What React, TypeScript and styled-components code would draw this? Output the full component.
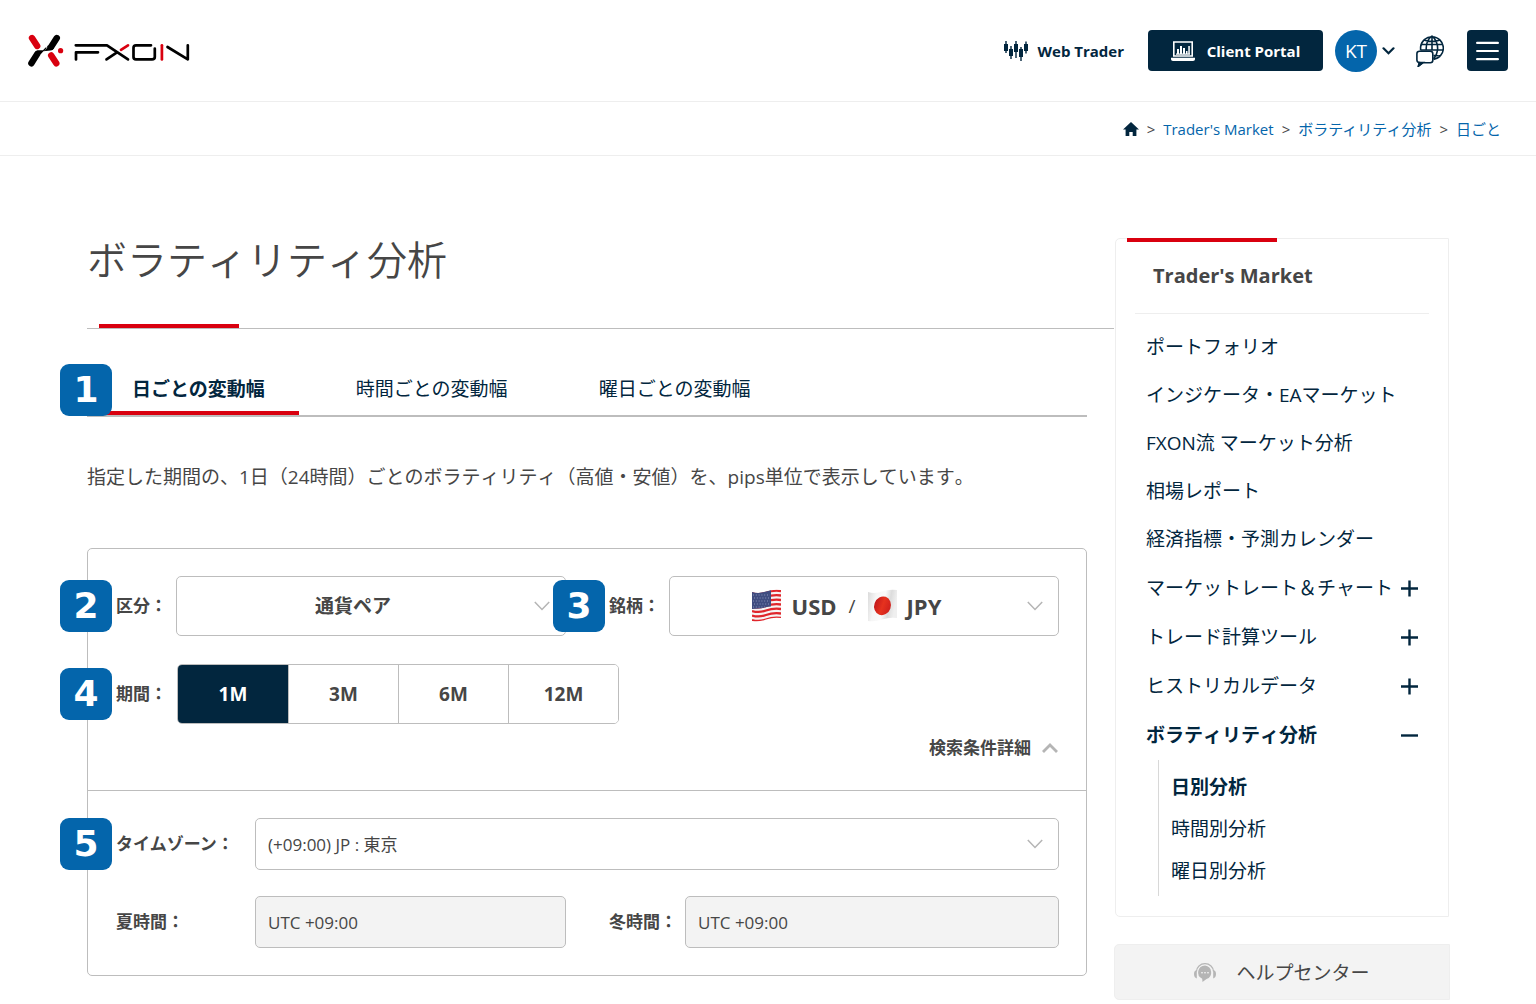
import React, { useState } from "react";
import styled, { createGlobalStyle, css } from "styled-components";

const navy = "#02263e";
const blue = "#0465ab";
const red = "#d9000f";
const ink = "#464646";
const line = "#bdbdbd";
const pale = "#eeeeee";
const sans = `"Open Sans", "Noto Sans CJK JP", sans-serif`;

const GlobalStyle = createGlobalStyle`
  *, *::before, *::after { box-sizing: border-box; }
  body { margin: 0; background: #fff; color: ${ink}; font-family: ${sans}; font-size: 19px; font-weight: 400; }
  button, input, select { font: inherit; color: inherit; margin: 0; }
  button { cursor: pointer; }
  a { color: inherit; text-decoration: none; }
  ul, ol { list-style: none; margin: 0; padding: 0; }
  svg { display: block; flex: none; }
`;

/* ---------- header ---------- */

const Header = styled.header`
  display: flex;
  align-items: center;
  justify-content: space-between;
  height: 102px;
  padding: 0 28px;
  border-bottom: 1px solid ${pale};
`;

const HeaderNav = styled.nav`
  display: flex;
  align-items: center;
`;

const WebTrader = styled.a`
  display: flex;
  align-items: center;
  gap: 10px;
  margin-right: 24px;
  color: ${navy};
  font-size: 15px;
  font-weight: 700;
`;

const PortalButton = styled.a`
  display: flex;
  align-items: center;
  justify-content: center;
  gap: 12px;
  width: 175px;
  height: 41px;
  margin-right: 12px;
  border-radius: 4px;
  background: ${navy};
  color: #fff;
  font-size: 15px;
  font-weight: 700;
`;

const AccountButton = styled.button`
  display: flex;
  align-items: center;
  gap: 5px;
  margin-right: 21px;
  padding: 0;
  border: 0;
  background: none;
  color: ${navy};
`;

const Avatar = styled.span`
  display: grid;
  place-items: center;
  width: 42px;
  height: 42px;
  border-radius: 50%;
  background: ${blue};
  color: #fff;
  font-size: 19px;
`;

const IconButton = styled.button`
  display: grid;
  place-items: center;
  margin-right: 23px;
  padding: 0;
  border: 0;
  background: none;
`;

const MenuButton = styled.button`
  display: grid;
  place-items: center;
  width: 41px;
  height: 41px;
  padding: 0;
  border: 0;
  border-radius: 4px;
  background: ${navy};
`;

const Breadcrumb = styled.nav`
  height: 54px;
  padding: 0 35px;
  border-bottom: 1px solid ${pale};
  font-size: 15px;

  ol {
    display: flex;
    align-items: center;
    justify-content: flex-end;
    height: 100%;
  }
  li {
    display: flex;
    align-items: center;
  }
  li + li::before {
    content: ">";
    margin: 0 8px;
  }
  a {
    color: ${blue};
  }
`;

/* ---------- page frame ---------- */

const Page = styled.div`
  display: flex;
  align-items: flex-start;
  padding: 82px 87px 4px;
`;

const Content = styled.main`
  flex: 1;
  min-width: 0;
`;

const Title = styled.h1`
  position: relative;
  margin: 0;
  padding-bottom: 46px;
  border-bottom: 1px solid ${line};
  font-size: 40px;
  line-height: 44px;
  font-weight: 350;
  font-kerning: none;

  &::after {
    content: "";
    position: absolute;
    left: 12px;
    bottom: 0;
    width: 140px;
    height: 4px;
    background: ${red};
  }
`;

const Inner = styled.div`
  padding: 35px 27px 0 0;
`;

const Badge = styled.span`
  position: absolute;
  left: -56px;
  top: 50%;
  z-index: 1;
  display: grid;
  place-items: center;
  width: 52px;
  height: 52px;
  margin-top: -26px;
  border-radius: 9px;
  background: ${blue};
  color: #fff;
  font-family: "DejaVu Sans", sans-serif;
  font-size: 36px;
  line-height: 52px;
  font-weight: 700;
`;

const TabBar = styled.div`
  position: relative;
  display: flex;
  gap: 23px;
  height: 53px;
  padding-left: 11px;
  border-bottom: 2px solid ${line};

  & > ${Badge} {
    left: -27px;
  }
`;

const Tab = styled.button<{ $active: boolean }>`
  height: 51px;
  padding: 0 34px;
  border: 0;
  border-bottom: 4px solid ${(p) => (p.$active ? red : "transparent")};
  background: none;
  color: ${navy};
  font-size: 19px;
  font-weight: ${(p) => (p.$active ? 700 : 400)};
`;

const Lead = styled.p`
  margin: 44px 0 55px;
  line-height: 32px;
  font-kerning: none;
`;

/* ---------- search panel ---------- */

const Panel = styled.form`
  border: 1px solid ${line};
  border-radius: 5px;
`;

const PanelSection = styled.div<{ $divided?: boolean }>`
  display: grid;
  gap: ${(p) => (p.$divided ? 26 : 28)}px 43px;
  grid-template-columns: 1fr 1fr;
  padding: 27px;
  padding-left: 28px;
  ${(p) => p.$divided && css`border-top: 1px solid ${line};`}
`;

const Field = styled.div<{ $label: number; $wide?: boolean }>`
  position: relative;
  display: grid;
  grid-template-columns: ${(p) => p.$label}px 1fr;
  align-items: center;
  ${(p) => p.$wide && css`grid-column: 1 / -1;`}
`;

const labelText = css`
  font-size: 17px;
  line-height: 24px;
  font-weight: 700;
  white-space: nowrap;
`;

const Label = styled.label`
  ${labelText}
`;

const control = css`
  width: 100%;
  border: 1px solid ${line};
  border-radius: 5px;
  background: #fff;
`;

const SelectBox = styled.div`
  position: relative;

  & > svg {
    position: absolute;
    right: 16px;
    top: 50%;
    margin-top: -5px;
    pointer-events: none;
  }
`;

const CenteredSelect = styled.select`
  ${control}
  appearance: none;
  height: 60px;
  padding: 0 36px 0 0;
  text-align: center;
  text-align-last: center;
  font-weight: 700;
`;

const PlainSelect = styled.select`
  ${control}
  appearance: none;
  height: 52px;
  padding: 0 36px 0 12px;
  font-size: 17px;
`;

const PairButton = styled.button`
  ${control}
  display: flex;
  align-items: center;
  justify-content: center;
  gap: 12px;
  height: 60px;
  padding: 0 36px 0 0;

  b {
    font-size: 22px;
  }
`;

const CurrencyTag = styled.span`
  display: flex;
  align-items: center;
  gap: 10px;
`;

const ReadonlyInput = styled.input`
  ${control}
  height: 52px;
  padding: 0 12px;
  background: #f3f3f3;
  font-size: 17px;
`;

const PeriodGroup = styled.div`
  display: grid;
  grid-template-columns: repeat(4, 110px);
  justify-self: start;
  height: 60px;
  margin-left: 1px;
  overflow: hidden;
  border: 1px solid ${line};
  border-radius: 5px;
`;

const PeriodButton = styled.button<{ $active: boolean }>`
  padding: 0;
  border: 0;
  background: ${(p) => (p.$active ? navy : "#fff")};
  color: ${(p) => (p.$active ? "#fff" : ink)};
  font-weight: 700;

  & + & {
    border-left: 1px solid ${line};
  }
`;

const DetailRow = styled.div`
  display: flex;
  justify-content: flex-end;
  padding: 0 28px 30px;
  margin-top: -15px;
`;

const DetailToggle = styled.button`
  display: flex;
  align-items: center;
  gap: 11px;
  padding: 0;
  border: 0;
  background: none;
  ${labelText}
`;

/* ---------- sidebar ---------- */

const Sidebar = styled.aside`
  width: 336px;
  margin-right: -1px;
`;

const SideCard = styled.nav`
  position: relative;
  margin: 0 1px;
  padding: 0 19px 20px;
  border: 1px solid ${pale};
  border-radius: 5px 0 0 5px;

  &::before {
    content: "";
    position: absolute;
    left: 11px;
    top: -1px;
    width: 150px;
    height: 4px;
    background: ${red};
  }
`;

const SideTitle = styled.h2`
  margin: 0 0 8px;
  padding-left: 18px;
  border-bottom: 1px solid ${pale};
  font-size: 20px;
  line-height: 74px;
  font-weight: 700;
`;

const SideItem = styled.a`
  display: flex;
  align-items: center;
  height: 48px;
  padding-left: 11px;
  color: ${navy};
  white-space: nowrap;
  font-kerning: none;
`;

const SideToggle = styled.button<{ $open: boolean }>`
  display: flex;
  align-items: center;
  justify-content: space-between;
  width: 100%;
  height: 49px;
  padding: 0 10px 0 11px;
  border: 0;
  background: none;
  color: ${navy};
  white-space: nowrap;
  font-kerning: none;
  font-weight: ${(p) => (p.$open ? 700 : 400)};
`;

const SubList = styled.ul`
  margin: 2px 0 0 23px;
  padding: 5px 0 5px 12px;
  border-left: 1px solid #d8d8d8;
`;

const SubItem = styled.a<{ $current: boolean }>`
  display: flex;
  align-items: center;
  height: 42px;
  color: ${navy};
  font-weight: ${(p) => (p.$current ? 700 : 400)};
`;

const HelpLink = styled.a`
  display: flex;
  align-items: center;
  justify-content: center;
  gap: 20px;
  height: 56px;
  margin-top: 27px;
  border: 1px solid ${pale};
  border-radius: 5px 0 0 5px;
  background: #f3f3f3;
`;

/* ---------- drawings ---------- */

const Logo = () => (
  <svg width="162" height="34" viewBox="28 34 162 34" fill="none" role="img" aria-label="FXON">
    <g strokeLinecap="round" strokeWidth="6.4">
      <line x1="32" y1="38" x2="37.2" y2="46" stroke={red} />
      <line x1="51.2" y1="55.4" x2="56.3" y2="63.3" stroke={red} />
      <line x1="56.8" y1="38" x2="51.2" y2="46.8" stroke="#000" />
      <line x1="31.4" y1="63.3" x2="37" y2="54.4" stroke="#000" />
    </g>
    <path d="M47.5 47.3L45 50.4L43.4 51.3L40.5 54.5L34.5 52.6Q35.8 50.4 37.5 50.3L43 50.2L45.6 47.6ZM45 50.2L43.4 51.2L50.5 50.5Q53 50.2 54 48.3L48 45.2Z" fill="#000" />
    <circle cx="60.6" cy="50.7" r="2.6" fill={red} />
    <g strokeWidth="2.7" strokeLinecap="round" strokeLinejoin="round" stroke="#000">
      <polyline points="75.8,45.3 107,45.3 128,59.4" />
      <polyline points="76,59.4 76,52.3 98,52.3" />
      <line x1="106.5" y1="59.4" x2="117" y2="52.4" />
      <path d="M151 45.3H136Q133.5 45.3 133.5 47.8V57Q133.5 59.4 136 59.4H152Q154.8 59.4 154.8 57V48.5" />
      <polyline points="167.5,47 187.8,59.4 187.8,45.3" />
      <line x1="121" y1="49.8" x2="128" y2="45.3" stroke={red} />
      <line x1="161.9" y1="45.3" x2="161.9" y2="59.4" stroke={red} />
    </g>
  </svg>
);

const CandlesIcon = () => (
  <svg width="24" height="22" viewBox="0 0 24 22" fill={navy}>
    <path d="M0 4h4v7H0zM1.3 1h1.400v12H1.300zM5 9h4v7H5zM6.300 6h1.400v13H6.300zM10 4h4v8h-4zM11.300 1h1.400v17h-1.400zM15 9h4v8h-4zM16.300 7h1.400v14h-1.400zM20 4h4v7h-4zM21.300 1.500h1.400v12h-1.400z" />
  </svg>
);

const LaptopIcon = () => (
  <svg width="24" height="20" viewBox="0 0 24 20" fill="none">
    <path d="M2.800 15V1h18.400v14z" stroke="#fff" strokeWidth="1.600" />
    <path d="M6 13V8h2v5zM9 13V5h2v8zM12 13V7h2v6zM15 13v-3h1.500v3zM17.300 13V5h1.500v8zM5 12.600h14v1.200H5zM0 16.800h24v1.400q0 1.800-2 1.800H2q-2 0-2-1.800z" fill="#fff" />
  </svg>
);

const GlobeIcon = () => (
  <svg width="28" height="32" viewBox="0 0 28 32" fill="none" stroke={navy} strokeWidth="1.600">
    <path d="M4.600 15.500V12a11.400 11.400 0 1 1 12.900 12.400M4.800 9.500h22M5 15h22.300M16 .9v14.500M8 5q8 3 16 0M16 .9q-6.500 5-5.700 14.300M16 .9q6.500 6 5.500 14.500-.6 5-4 8.500M17.500 20.500q4-.2 7 .9" />
    <path d="M3.500 16.200h10.800q2.500 0 2.500 2.500v6.500q0 2.500-2.500 2.500H7l-4.500 3.400.8-3.600Q.9 27.300.9 25v-6.300q0-2.500 2.600-2.500z" fill="#fff" />
    <path d="M2.500 31l.8-3.500H7z" fill={navy} />
  </svg>
);

const BarsIcon = () => (
  <svg width="23" height="20" viewBox="0 0 23 20" stroke="#fff" strokeWidth="2.200" strokeLinecap="round">
    <path d="M1.100 1.900h20.800M1.100 10h20.800M1.100 18.200h20.800" />
  </svg>
);

const HomeIcon = () => (
  <svg width="16" height="14" viewBox="0 0 16 14" fill={navy}>
    <path d="M8 0l8 7.500h-2.600V14H9.700v-4H6.300v4H2.600V7.500H0z" />
  </svg>
);

const Caret = ({ color = "#b5b5b5", up = false, bold = false }: { color?: string; up?: boolean; bold?: boolean }) => (
  <svg width={16} height={10} viewBox="0 0 16 10" fill="none" stroke={color} strokeWidth={bold ? 2.800 : 1.500}>
    <path d={up ? "M1 9l7-7 7 7" : "M.8 1l7.200 7.500L15.200 1"} />
  </svg>
);

const AccountCaret = () => (
  <svg width="13" height="8" viewBox="0 0 13 8" fill="none" stroke={navy} strokeWidth="2.200" strokeLinecap="round">
    <path d="M1.500 1.300l5 5 5-5" />
  </svg>
);

const PlusMinus = ({ open }: { open: boolean }) => (
  <svg width="18" height="20" viewBox="0 0 18 20" stroke={navy} strokeWidth="2.400">
    <path d={open ? "M0 11.500h17" : "M0 11.500h17M8.500 3.500v16"} />
  </svg>
);

const wave = "M1 3Q8 5 15 2.500T30 1V29Q22 28 15 30.500T1 32Z";

const UsFlag = () => (
  <svg width="31" height="34" viewBox="0 0 31 34">
    <clipPath id="us"><path d={wave} /></clipPath>
    <g clipPath="url(#us)">
      <rect width="31" height="34" fill="#f6f3f3" />
      <g fill="none" stroke="#e0252b" strokeWidth="2.300">
        {[2, 6.500, 11, 15.500, 20, 24.500, 29].map((y) => (
          <path key={y} d={`M1 ${y + 2}Q8 ${y + 4} 15 ${y + 1.500}T30 ${y}`} />
        ))}
      </g>
      <path d="M1 0H20V17.500Q17 17.500 14 18.500T1 20Z" fill="#3f4c80" />
      <path d="M2 6h17M3 9h16M2 12h17M3 15h16M2 18h12" stroke="#8b95bb" strokeWidth="1" strokeDasharray="1 1.800" />
    </g>
  </svg>
);

const JpFlag = () => (
  <svg width="29" height="34" viewBox="1 0 29 34">
    <defs>
      <linearGradient id="jp" x1="0" x2="1" y1="0" y2=".2">
        <stop offset="0" stopColor="#d9d9d9" />
        <stop offset=".3" stopColor="#f6f6f6" />
        <stop offset=".6" stopColor="#fafafa" />
        <stop offset=".8" stopColor="#dcdcdc" />
        <stop offset="1" stopColor="#efefef" />
      </linearGradient>
      <linearGradient id="sun" x1="0" x2="1">
        <stop offset="0" stopColor="#c2181b" />
        <stop offset=".5" stopColor="#e6321e" />
        <stop offset="1" stopColor="#cf201c" />
      </linearGradient>
    </defs>
    <path d={wave} fill="url(#jp)" />
    <ellipse cx="15.500" cy="16.800" rx="8.300" ry="9.500" fill="url(#sun)" transform="rotate(20 15.500 16.800)" />
  </svg>
);

const HeadsetIcon = () => (
  <svg width="22" height="19" viewBox="0 0 22 19" fill="#b5b5b5">
    <path d="M2.500 8.500A8.500 7.800 0 0 1 19.500 8.500" fill="none" stroke="#b5b5b5" strokeWidth="1.200" />
    <path d="M2.800 7Q0 7.500 0 11t2.800 4.500zM19.200 7q2.800 .5 2.800 4t-2.800 4.500z" />
    <path d="M11 2.500a7.200 7 0 0 1 1.500 13.500L8.500 19l-.3-3.200A7.200 7 0 0 1 11 2.500z" />
    <g fill="#fff"><circle cx="8" cy="9.800" r=".8" /><circle cx="11" cy="9.800" r=".8" /><circle cx="14" cy="9.800" r=".8" /></g>
  </svg>
);

/* ---------- data ---------- */

const tabs = ["日ごとの変動幅", "時間ごとの変動幅", "曜日ごとの変動幅"];
const periods = ["1M", "3M", "6M", "12M"];
const pages = [
  "ポートフォリオ",
  "インジケータ・EAマーケット",
  "FXON流 マーケット分析",
  "相場レポート",
  "経済指標・予測カレンダー",
];
const groups = ["マーケットレート＆チャート", "トレード計算ツール", "ヒストリカルデータ", "ボラティリティ分析"];
const analyses = ["日別分析", "時間別分析", "曜日別分析"];

export default function App() {
  const [tab, setTab] = useState(0);
  const [period, setPeriod] = useState("1M");

  return (
    <>
      <GlobalStyle />
      <Header>
        <a href="#top"><Logo /></a>
        <HeaderNav aria-label="メイン">
          <WebTrader href="#web-trader"><CandlesIcon />Web Trader</WebTrader>
          <PortalButton href="#portal"><LaptopIcon />Client Portal</PortalButton>
          <AccountButton type="button"><Avatar>KT</Avatar><AccountCaret /></AccountButton>
          <IconButton type="button" aria-label="言語"><GlobeIcon /></IconButton>
          <MenuButton type="button" aria-label="メニュー"><BarsIcon /></MenuButton>
        </HeaderNav>
      </Header>
      <Breadcrumb aria-label="パンくず">
        <ol>
          <li><a href="#top" aria-label="ホーム"><HomeIcon /></a></li>
          <li><a href="#market">Trader's Market</a></li>
          <li><a href="#volatility">ボラティリティ分析</a></li>
          <li><a href="#daily">日ごと</a></li>
        </ol>
      </Breadcrumb>

      <Page>
        <Content>
          <Title>ボラティリティ分析</Title>
          <Inner>
            <TabBar>
              <Badge>1</Badge>
              {tabs.map((name, i) => (
                <Tab key={name} type="button" $active={i === tab} onClick={() => setTab(i)}>{name}</Tab>
              ))}
            </TabBar>
            <Lead>指定した期間の、1日（24時間）ごとのボラティリティ（高値・安値）を、pips単位で表示しています。</Lead>

            <Panel>
              <PanelSection>
                <Field $label={60}>
                  <Badge>2</Badge>
                  <Label htmlFor="category">区分：</Label>
                  <SelectBox>
                    <CenteredSelect id="category"><option>通貨ペア</option></CenteredSelect>
                    <Caret />
                  </SelectBox>
                </Field>
                <Field $label={60}>
                  <Badge>3</Badge>
                  <Label htmlFor="pair">銘柄：</Label>
                  <SelectBox>
                    <PairButton id="pair" type="button" aria-haspopup="listbox">
                      <CurrencyTag><UsFlag /><b>USD</b></CurrencyTag>
                      <span>/</span>
                      <CurrencyTag><JpFlag /><b>JPY</b></CurrencyTag>
                    </PairButton>
                    <Caret />
                  </SelectBox>
                </Field>
                <Field $label={60} $wide>
                  <Badge>4</Badge>
                  <Label as="span" id="period-label">期間：</Label>
                  <PeriodGroup role="group" aria-labelledby="period-label">
                    {periods.map((p) => (
                      <PeriodButton key={p} type="button" $active={p === period} onClick={() => setPeriod(p)}>{p}</PeriodButton>
                    ))}
                  </PeriodGroup>
                </Field>
              </PanelSection>
              <DetailRow>
                <DetailToggle type="button" aria-expanded="true">検索条件詳細<Caret up bold /></DetailToggle>
              </DetailRow>
              <PanelSection $divided>
                <Field $label={139} $wide>
                  <Badge>5</Badge>
                  <Label htmlFor="zone">タイムゾーン：</Label>
                  <SelectBox>
                    <PlainSelect id="zone"><option>(+09:00) JP : 東京</option></PlainSelect>
                    <Caret />
                  </SelectBox>
                </Field>
                <Field $label={139}>
                  <Label htmlFor="summer">夏時間：</Label>
                  <ReadonlyInput id="summer" readOnly value="UTC +09:00" />
                </Field>
                <Field $label={76}>
                  <Label htmlFor="winter">冬時間：</Label>
                  <ReadonlyInput id="winter" readOnly value="UTC +09:00" />
                </Field>
              </PanelSection>
            </Panel>
          </Inner>
        </Content>

        <Sidebar>
          <SideCard aria-label="Trader's Market">
            <SideTitle>Trader's Market</SideTitle>
            <ul>
              {pages.map((name) => (
                <li key={name}><SideItem href="#page">{name}</SideItem></li>
              ))}
              {groups.map((name, i) => {
                const open = i === groups.length - 1;
                return (
                  <li key={name}>
                    <SideToggle type="button" $open={open} aria-expanded={open}>{name}<PlusMinus open={open} /></SideToggle>
                    {open && (
                      <SubList>
                        {analyses.map((a, k) => (
                          <li key={a}><SubItem href="#analysis" $current={k === 0}>{a}</SubItem></li>
                        ))}
                      </SubList>
                    )}
                  </li>
                );
              })}
            </ul>
          </SideCard>
          <HelpLink href="#help"><HeadsetIcon />ヘルプセンター</HelpLink>
        </Sidebar>
      </Page>
    </>
  );
}
